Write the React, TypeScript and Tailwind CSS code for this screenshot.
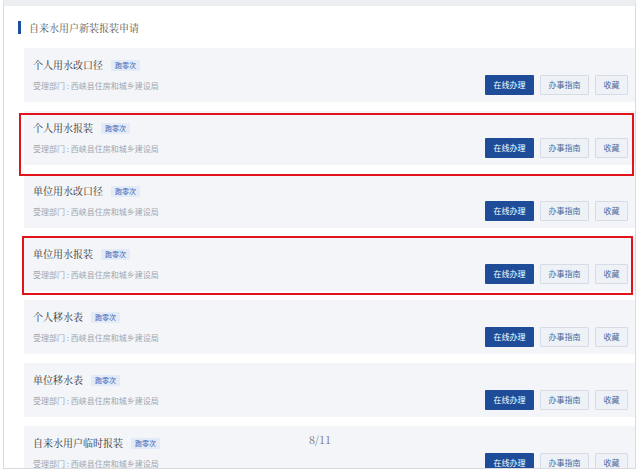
import React from 'react';

const items = [
  '个人用水改口径',
  '个人用水报装',
  '单位用水改口径',
  '单位用水报装',
  '个人移水表',
  '单位移水表',
  '自来水用户临时报装',
];

const serif = { fontFamily: '"Noto Serif CJK SC", "Liberation Serif", "Noto Sans CJK SC", serif' };

function ServiceCard({ title }: { title: string }) {
  return (
    <div className="flex h-[54px] shrink-0 justify-between bg-[#f3f5f9] pl-[9px] pr-[7px]">
      <div className="flex flex-col pt-[11px]">
        <div className="flex h-[12px] items-center gap-[8px]">
          <span className="text-[10px] leading-none text-[#333]" style={serif}>
            {title}
          </span>
          <span className="flex h-[11px] items-center rounded-[1px] bg-[#e3ebf8] px-[4px] text-[7px] leading-none text-[#3d68b8]">
            跑零次
          </span>
        </div>
        <p className="mt-[10px] text-[8px] leading-[10px] text-[#a3a6ac]">
          受理部门 : 西峡县住房和城乡建设局
        </p>
      </div>
      <div className="flex items-end gap-[6px] pb-[7px]">
        <button className="h-[20px] w-[49px] rounded-[1px] bg-[#1f4c98] text-[8px] text-white">
          在线办理
        </button>
        <button className="h-[20px] w-[49px] rounded-[1px] border border-[#d6dce6] bg-[#eef1f6] text-[8px] text-[#4f6a99]">
          办事指南
        </button>
        <button className="h-[20px] w-[33px] rounded-[1px] border border-[#d6dce6] bg-[#eef1f6] text-[8px] text-[#4f6a99]">
          收藏
        </button>
      </div>
    </div>
  );
}

export default function App() {
  return (
    <div
      className="relative h-[471px] w-[640px] overflow-hidden bg-white"
      style={{ fontFamily: '"Noto Sans CJK SC", "Noto Sans", sans-serif' }}
    >
      <div className="ml-[3px] flex h-[469px] w-[633px] flex-col overflow-hidden border-x border-b border-[#d9dbe0] border-t-[6px] border-t-[#eceef1] bg-white">
        {/* Header */}
        <div className="flex h-[42px] shrink-0 items-center gap-[8px] pl-[14px] pt-[1px]">
          <span className="h-[13px] w-[3px] bg-[#1d4f9e]" />
          <h1 className="text-[10px] font-normal text-[#555]" style={serif}>
            自来水用户新装报装申请
          </h1>
        </div>

        {/* List */}
        <div className="ml-[20px] flex flex-col gap-[9px]">
          {items.map((t) => (
            <ServiceCard key={t} title={t} />
          ))}
        </div>
      </div>

      {/* annotation boxes */}
      <div className="absolute left-[19px] top-[113px] h-[63px] w-[615px] border-2 border-[#e1141e]" />
      <div className="absolute left-[22px] top-[236px] h-[59px] w-[611px] border-2 border-[#e1141e]" />

      {/* page indicator */}
      <div className="absolute left-[309px] top-[431px] text-[11px] text-[#777]" style={serif}>
        8/11
      </div>
    </div>
  );
}
